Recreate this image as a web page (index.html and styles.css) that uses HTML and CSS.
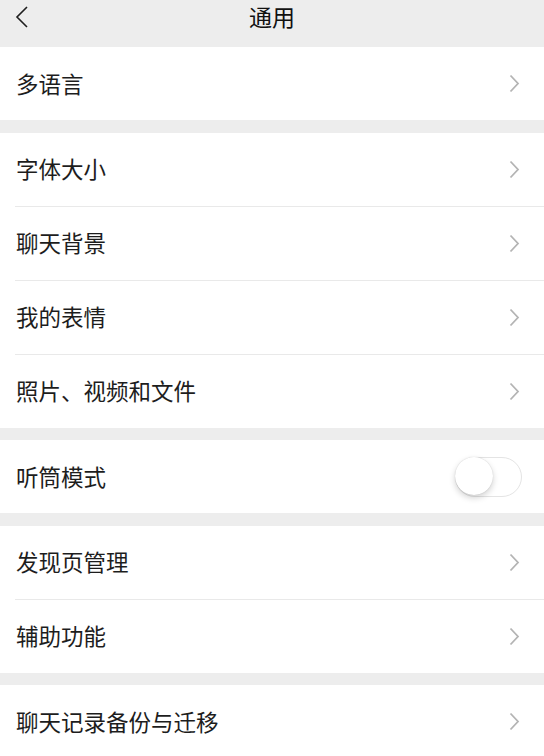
FILE: index.html
```html
<!DOCTYPE html>
<html lang="zh-CN">
<head>
<meta charset="utf-8">
<title>通用</title>
<link rel="stylesheet" href="styles.css">
</head>
<body>
<div class="page">
  <header class="nav">
    <svg class="back" width="14" height="22" viewBox="0 0 14 22"><path d="M12 1 L2 11 L12 21" fill="none" stroke="#1f1f1f" stroke-width="1.6" stroke-linejoin="miter"/></svg>
    <div class="title">通用</div>
  </header>

  <section class="group">
    <div class="row"><span class="label">多语言</span><svg class="arrow" width="11" height="19" viewBox="0 0 11 19"><path d="M1.5 1.5 L9 9.5 L1.5 17.5" fill="none" stroke="#b4b4b4" stroke-width="1.8"/></svg></div>
  </section>

  <section class="group">
    <div class="row"><span class="label">字体大小</span><svg class="arrow" width="11" height="19" viewBox="0 0 11 19"><path d="M1.5 1.5 L9 9.5 L1.5 17.5" fill="none" stroke="#b4b4b4" stroke-width="1.8"/></svg></div>
    <div class="row"><span class="label">聊天背景</span><svg class="arrow" width="11" height="19" viewBox="0 0 11 19"><path d="M1.5 1.5 L9 9.5 L1.5 17.5" fill="none" stroke="#b4b4b4" stroke-width="1.8"/></svg></div>
    <div class="row"><span class="label">我的表情</span><svg class="arrow" width="11" height="19" viewBox="0 0 11 19"><path d="M1.5 1.5 L9 9.5 L1.5 17.5" fill="none" stroke="#b4b4b4" stroke-width="1.8"/></svg></div>
    <div class="row"><span class="label">照片、视频和文件</span><svg class="arrow" width="11" height="19" viewBox="0 0 11 19"><path d="M1.5 1.5 L9 9.5 L1.5 17.5" fill="none" stroke="#b4b4b4" stroke-width="1.8"/></svg></div>
  </section>

  <section class="group">
    <div class="row"><span class="label">听筒模式</span><span class="switch"><span class="knob"></span></span></div>
  </section>

  <section class="group">
    <div class="row"><span class="label">发现页管理</span><svg class="arrow" width="11" height="19" viewBox="0 0 11 19"><path d="M1.5 1.5 L9 9.5 L1.5 17.5" fill="none" stroke="#b4b4b4" stroke-width="1.8"/></svg></div>
    <div class="row"><span class="label">辅助功能</span><svg class="arrow" width="11" height="19" viewBox="0 0 11 19"><path d="M1.5 1.5 L9 9.5 L1.5 17.5" fill="none" stroke="#b4b4b4" stroke-width="1.8"/></svg></div>
  </section>

  <section class="group">
    <div class="row"><span class="label">聊天记录备份与迁移</span><svg class="arrow" width="11" height="19" viewBox="0 0 11 19"><path d="M1.5 1.5 L9 9.5 L1.5 17.5" fill="none" stroke="#b4b4b4" stroke-width="1.8"/></svg></div>
  </section>
</div>
</body>
</html>
```
FILE: styles.css
```css
* { box-sizing: border-box; }
html, body {
  margin: 0;
  padding: 0;
  background: #ededed;
}
body {
  font-family: "Noto Sans CJK SC", "Noto Sans", sans-serif;
  color: #1b1b1b;
  width: 544px;
  height: 756px;
  overflow: hidden;
}
.page {
  display: flex;
  flex-direction: column;
  gap: 12.5px;
}
.nav {
  position: relative;
  height: 47px;
  margin-bottom: -12.5px;
  display: flex;
  justify-content: center;
  padding-top: 0;
  background: #ededed;
}
.back {
  position: absolute;
  left: 15px;
  top: 6px;
}
.title {
  font-size: 23px;
  line-height: 32px;
  font-weight: 400;
  color: #111;
}
.group {
  background: #fff;
  display: flex;
  flex-direction: column;
}
.row {
  height: 73px;
  display: flex;
  align-items: center;
  justify-content: space-between;
  padding: 0 24px 2px 16px;
  position: relative;
}
.row + .row {
  height: 74px;
  border-top: 1px solid transparent;
}
.row + .row::before {
  content: "";
  position: absolute;
  left: 15px;
  right: 0;
  top: -1px;
  height: 1px;
  background: #e9e9e9;
}
.label {
  font-size: 22.5px;
  line-height: 32px;
  color: #1d1d1d;
}
.arrow {
  display: block;
  margin-top: 2px;
}
.switch {
  width: 67px;
  height: 40px;
  border: 1.5px solid #e4e4e4;
  border-radius: 20px;
  position: relative;
  margin-right: -2px;
  margin-top: 2px;
  background: #fff;
}
.knob {
  position: absolute;
  left: -1px;
  top: -1px;
  width: 38px;
  height: 38px;
  border-radius: 50%;
  background: #fff;
  box-shadow: 0 3px 6px rgba(0,0,0,0.18), 0 0 1px rgba(0,0,0,0.2);
}
```
